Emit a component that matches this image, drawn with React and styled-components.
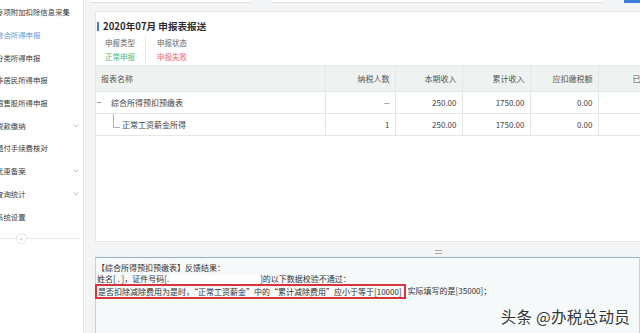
import React from 'react';
import styled, { createGlobalStyle } from 'styled-components';

const GlobalStyle = createGlobalStyle`
  html, body {
    margin: 0;
    padding: 0;
    background: #f3f4f5;
  }
  body {
    font-family: "Noto Sans CJK SC", "Liberation Sans", sans-serif;
  }
`;

const Screen = styled.div`
  width: 640px;
  height: 333px;
  display: flex;
  overflow: hidden;
  color: #333;
`;

const Sidebar = styled.nav`
  width: 83px;
  flex: none;
  background: #fff;
  border-right: 1px solid #e2e4e6;
  display: flex;
  flex-direction: column;
  padding-top: 1px;
  overflow: hidden;
`;

const NavItem = styled.div`
  height: 22.7px;
  flex: none;
  display: flex;
  align-items: center;
  justify-content: space-between;
  padding-right: 4px;
  font-size: 7.4px;
  line-height: 10px;
  white-space: nowrap;
  color: ${p => (p.$active ? '#5c9bd6' : '#3a3a3a')};

  span {
    margin-left: -4px;
  }
`;

const Collapse = styled.div`
  margin-top: 10px;
  height: 1px;
  background: #e6e8ea;
  margin-right: 3px;
  position: relative;
`;

const CollapseKnob = styled.div`
  position: absolute;
  left: 16px;
  top: -5px;
  width: 9px;
  height: 9px;
  border-radius: 50%;
  border: 1px solid #e2e2e2;
  background: #fff;
  color: #aaa;
  font-size: 6px;
  line-height: 9px;
  text-align: center;
`;

const Main = styled.main`
  flex: 1;
  min-width: 0;
  display: flex;
  flex-direction: column;
  position: relative;
  overflow: hidden;
`;

const TopStrip = styled.div`
  height: 3px;
  display: flex;
  padding-left: 6px;
  gap: 22px;
  flex: none;
`;

const StripBox = styled.div`
  width: ${p => p.$w}px;
  flex: none;
  background: ${p => (p.$blue ? '#3b7fd8' : '#fff')};
  border-bottom: 1px solid ${p => (p.$blue ? '#3b7fd8' : '#dfe1e3')};
`;

const Card = styled.section`
  margin: 8px 0 0 11px;
  width: 700px;
  height: 229px;
  flex: none;
  background: #fff;
  border: 1px solid #e4e6e8;
`;

const Title = styled.h2`
  margin: 8px 0 0 1px;
  display: flex;
  align-items: center;
  gap: 4px;
  height: 12px;
  font-size: 9.6px;
  line-height: 12px;
  font-weight: 700;
  color: #2b2b2b;
  white-space: pre;

  &::before {
    content: '';
    width: 2px;
    height: 9px;
    background: #3e7fcf;
  }
`;

const Info = styled.div`
  margin: 4px 0 0 9px;
  display: flex;
`;

const InfoCol = styled.div`
  display: flex;
  flex-direction: column;
  font-size: 7.5px;
  line-height: 14px;
  padding: 0 ${p => (p.$first ? 10 : 0)}px 0 ${p => (p.$first ? 0 : 11)}px;
  border-right: ${p => (p.$first ? '1px solid #e6e8ea' : 'none')};
  color: #666;
`;

const Status = styled.span`
  color: ${p => p.$color};
`;

const Table = styled.table`
  margin-top: 1px;
  border-collapse: collapse;
  table-layout: fixed;
  width: 698px;
  font-size: 8px;
  color: #444;
`;

const Th = styled.th`
  height: 25px;
  padding: 0 5px 0 ${p => (p.$left ? 5 : 0)}px;
  background: #eef3f1;
  font-weight: 400;
  color: #555;
  text-align: ${p => (p.$left ? 'left' : 'right')};
  border-top: 1px solid #e3e7e6;
  border-bottom: 1px solid #e3e7e6;
  border-left: ${p => (p.$left ? 'none' : '1px solid #e3e7e6')};
  white-space: nowrap;
  overflow: hidden;
`;

const Td = styled.td`
  height: 21px;
  padding: 0 5px 0 0;
  text-align: right;
  border-bottom: 1px solid #e3e7e6;
  border-left: 1px solid #e3e7e6;
  white-space: nowrap;
`;

const NameTd = styled.td`
  height: 21px;
  padding: 0;
  border-bottom: 1px solid #e3e7e6;
`;

const TreeCell = styled.div`
  display: flex;
  align-items: center;
  height: 100%;
`;

const Toggle = styled.span`
  width: 4px;
  height: 1px;
  background: #999;
  margin: 0 10px 0 1px;
`;

const Branch = styled.span`
  align-self: flex-start;
  width: 6px;
  height: 13px;
  margin: 0 2px 0 17px;
  border-left: 1px solid #b4b4b4;
  border-bottom: 1px solid #b4b4b4;
`;

const Splitter = styled.div`
  height: 15px;
  flex: none;
  display: flex;
  align-items: center;
  padding-left: 351px;
`;

const Grip = styled.span`
  width: 7px;
  height: 2px;
  margin-top: 4px;
  border-top: 1px solid #a9a9a9;
  border-bottom: 1px solid #a9a9a9;
`;

const Feedback = styled.section`
  flex: 1;
  margin-left: 11px;
  width: 542px;
  border-top: 1px solid #9cb0c2;
  border-left: 1px solid #c9d0d6;
  border-right: 1px solid #c9d0d6;
  background: #f6f9f9;
  padding: 4px 0 0 1px;
  font-size: 8px;
  line-height: 11px;
  color: #333;
`;

const Line = styled.div`
  white-space: nowrap;
`;

const Masked = styled.span`
  display: inline-block;
  width: 91px;
  height: 10px;
  vertical-align: middle;
  background: #fff;
`;

const Flagged = styled.span`
  display: inline-block;
  vertical-align: top;
  margin: -1px 2px 0 -2px;
  padding: 1px 2px 1px 1px;
  border: 2px solid #d8343c;
  line-height: 9px;
`;

const Watermark = styled.div`
  position: absolute;
  right: 10px;
  bottom: 8px;
  font-size: 15.5px;
  line-height: 18px;
  color: #333;
  letter-spacing: 0.3px;
  text-shadow: 0 0 2px #fff, 0 0 2px #fff;
`;

const Chevron = () => (
  <svg width="6" height="4" viewBox="0 0 6 4">
    <polyline points="0.5,0.5 3,3 5.5,0.5" fill="none" stroke="#b0b0b0" strokeWidth="0.8" />
  </svg>
);

const menu = [
  { label: '专项附加扣除信息采集' },
  { label: '综合所得申报', active: true },
  { label: '分类所得申报' },
  { label: '非居民所得申报' },
  { label: '限售股所得申报' },
  { label: '税款缴纳', more: true },
  { label: '退付手续费核对' },
  { label: '优惠备案', more: true },
  { label: '查询统计', more: true },
  { label: '系统设置' },
];

const columns = [
  { title: '报表名称', width: 229, left: true },
  { title: '纳税人数', width: 70 },
  { title: '本期收入', width: 67 },
  { title: '累计收入', width: 68 },
  { title: '应扣缴税额', width: 68 },
  { title: '已缴税额', width: 72 },
  { title: '', width: 124 },
];

const rows = [
  { name: '综合所得预扣预缴表', parent: true, values: ['--', '250.00', '1750.00', '0.00', '0.00', ''] },
  { name: '正常工资薪金所得', values: ['1', '250.00', '1750.00', '0.00', '0.00', ''] },
];

export default function App() {
  return (
    <>
      <GlobalStyle />
      <Screen>
        <Sidebar>
          {menu.map(item => (
            <NavItem key={item.label} $active={item.active}>
              <span>{item.label}</span>
              {item.more && <Chevron />}
            </NavItem>
          ))}
          <Collapse>
            <CollapseKnob>«</CollapseKnob>
          </Collapse>
        </Sidebar>

        <Main>
          <TopStrip>
            <StripBox $w={160} />
            <StripBox $w={330} />
            <StripBox $w={20} $blue />
          </TopStrip>

          <Card>
            <Title>2020年07月 申报表报送</Title>
            <Info>
              <InfoCol $first>
                <span>申报类型</span>
                <Status $color="#3dba7e">正常申报</Status>
              </InfoCol>
              <InfoCol>
                <span>申报状态</span>
                <Status $color="#e8646c">申报失败</Status>
              </InfoCol>
            </Info>

            <Table>
              <colgroup>
                {columns.map((c, i) => (
                  <col key={i} style={{ width: c.width }} />
                ))}
              </colgroup>
              <thead>
                <tr>
                  {columns.map((c, i) => (
                    <Th key={i} $left={c.left}>{c.title}</Th>
                  ))}
                </tr>
              </thead>
              <tbody>
                {rows.map(r => (
                  <tr key={r.name}>
                    <NameTd>
                      <TreeCell>
                        {r.parent ? <Toggle /> : <Branch />}
                        {r.name}
                      </TreeCell>
                    </NameTd>
                    {r.values.map((v, i) => (
                      <Td key={i}>{v}</Td>
                    ))}
                  </tr>
                ))}
              </tbody>
            </Table>
          </Card>

          <Splitter>
            <Grip />
          </Splitter>

          <Feedback>
            <Line>【综合所得预扣预缴表】反馈结果：</Line>
            <Line>
              姓名[ . ]，证件号码[.<Masked />]的以下数据校验不通过：
            </Line>
            <Line>
              <Flagged>是否扣除减除费用为是时，“正常工资薪金”中的“累计减除费用”应小于等于[10000]</Flagged>
              实际填写的是[35000]；
            </Line>
          </Feedback>

          <Watermark>头条 @办税总动员</Watermark>
        </Main>
      </Screen>
    </>
  );
}
